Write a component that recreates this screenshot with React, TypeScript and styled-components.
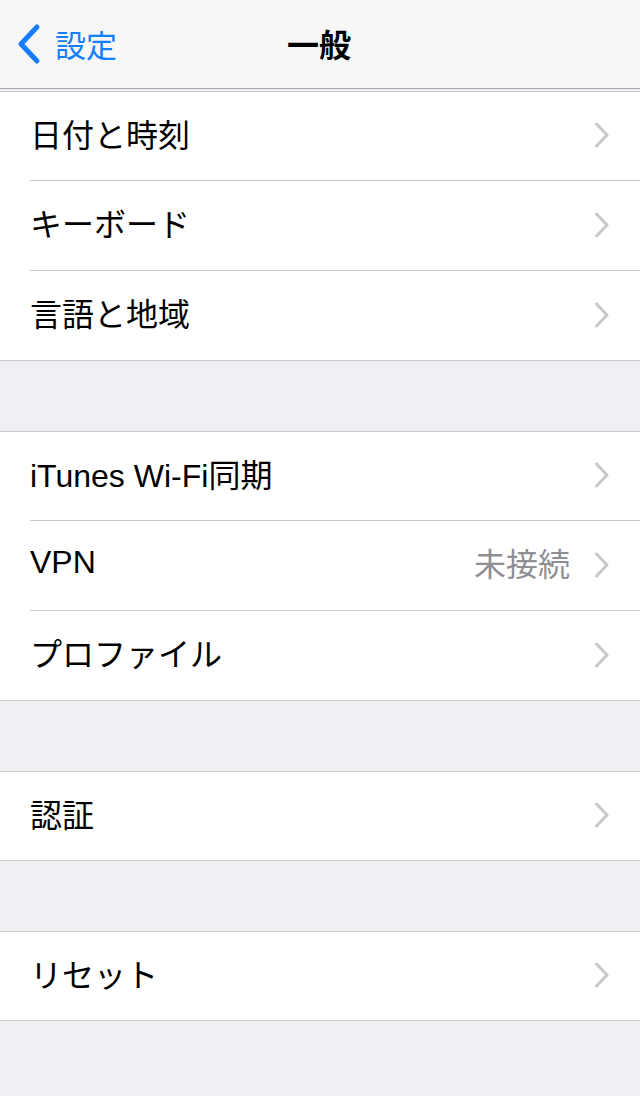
import React from 'react';
import styled, { createGlobalStyle } from 'styled-components';

const GlobalStyle = createGlobalStyle`
  html, body {
    margin: 0;
    padding: 0;
    background: #efeff4;
  }
  body {
    font-family: 'Liberation Sans', 'Noto Sans CJK JP', sans-serif;
  }
`;

type RowType = {
  label: string;
  detail?: string;
};

const groups: RowType[][] = [
  [{ label: '日付と時刻' }, { label: 'キーボード' }, { label: '言語と地域' }],
  [{ label: 'iTunes Wi-Fi同期' }, { label: 'VPN', detail: '未接続' }, { label: 'プロファイル' }],
  [{ label: '認証' }],
  [{ label: 'リセット' }],
];

const BackChevron = () => (
  <svg width="28" height="42" viewBox="0 0 28 42">
    <path d="M22 4 L6 21 L22 38" fill="none" stroke="#157efb" strokeWidth="5" strokeLinecap="round" strokeLinejoin="round" />
  </svg>
);

const Chevron = () => (
  <svg width="16" height="26" viewBox="0 0 16 26">
    <path d="M2.5 2 L13 13 L2.5 24" fill="none" stroke="#c7c7cc" strokeWidth="3" strokeLinecap="round" strokeLinejoin="round" />
  </svg>
);

const App = () => {
  return (
    <Page>
      <GlobalStyle />
      <NavBar>
        <Back>
          <BackChevron />
          <BackText>設定</BackText>
        </Back>
        <Title>一般</Title>
      </NavBar>
      <Content>
        {groups.map((rows, gi) => (
          <Group key={gi}>
            {rows.map((row) => (
              <Row key={row.label}>
                <Label>{row.label}</Label>
                {row.detail && <Detail>{row.detail}</Detail>}
                <ChevronBox>
                  <Chevron />
                </ChevronBox>
              </Row>
            ))}
          </Group>
        ))}
      </Content>
    </Page>
  );
};

const Page = styled.div`
  width: 640px;
  min-height: 1096px;
  background: #efeff4;
`;

const NavBar = styled.header`
  position: relative;
  height: 88px;
  background: #f7f7f7;
  border-bottom: 1px solid #a8a8ae;

  display: flex;
  align-items: center;
  justify-content: center;
`;

const Back = styled.div`
  position: absolute;
  left: 15px;
  top: 0;
  height: 88px;

  display: flex;
  align-items: center;
  gap: 12px;
`;

const BackText = styled.span`
  color: #157efb;
  font-size: 31px;
  margin-top: -2px;
`;

const Title = styled.h1`
  margin: -3px 0 0 -2px;
  color: #000;
  font-size: 32px;
  font-weight: 700;
`;

const Content = styled.main`
  display: flex;
  flex-direction: column;
  gap: 70px;
  padding-top: 2px;
`;

const Group = styled.section`
  background: #fff;
  border-top: 1px solid #c8c7cc;
  border-bottom: 1px solid #c8c7cc;
  padding-left: 30px;
`;

const Row = styled.div`
  height: 89px;
  padding-right: 30px;
  border-top: 1px solid #c8c7cc;

  display: flex;
  align-items: center;

  &:first-child {
    height: 88px;
    border-top: none;
  }
`;

const Label = styled.span`
  flex: 1;
  color: #000;
  font-size: 32px;
  margin-top: -7px;
`;

const Detail = styled.span`
  color: #8e8e93;
  font-size: 32px;
  margin-right: 24px;
  margin-top: -7px;
`;

const ChevronBox = styled.span`
  display: flex;
  align-items: center;
  margin-top: -2px;
`;

export default App;
